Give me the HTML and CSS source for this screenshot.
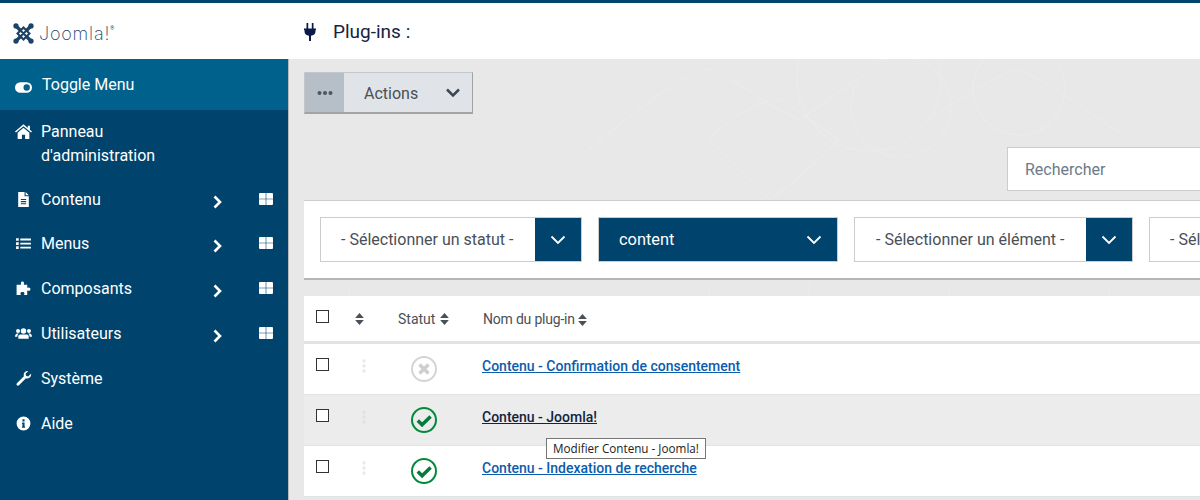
FILE: index.html
```html
<!DOCTYPE html>
<html lang="fr">
<head>
<meta charset="utf-8">
<title>Plug-ins</title>
<link rel="stylesheet" href="styles.css">
</head>
<body>
<header class="topbar">
  <div class="brand">
    <svg class="brand-mark" viewBox="0 0 24 24"><g fill="none" stroke="#1c4267" stroke-linecap="round"><path stroke-width="4" d="M3.500 3.500 9 9M20.500 3.500 15 9M3.500 20.500 9 15M20.500 20.500 15 15"/><path stroke-width="2.400" fill="#fff" d="M12 5.200 18.800 12 12 18.800 5.200 12z"/><path stroke-width="2.400" d="M8.800 8.800 15.200 15.200M15.200 8.800 8.800 15.200"/></g><g fill="#1c4267"><circle cx="3.400" cy="3.400" r="3"/><circle cx="20.600" cy="3.400" r="3"/><circle cx="3.400" cy="20.600" r="3"/><circle cx="20.600" cy="20.600" r="3"/></g></svg>
    <span class="brand-name">Joomla!</span><sup class="brand-reg">®</sup>
  </div>
  <div class="page-title">
    <svg class="plug" viewBox="0 0 12 18"><path fill="#0a1a4a" d="M2.500 0h1.700v5.500H2.500zM7.800 0h1.700v5.500H7.800zM0 5.500h12v1.500h-.5v1.500c0 2.400-2 4-4.500 4.300V18H5v-5.200C2.500 12.500.5 10.900.5 8.500V7H0z"/></svg>
    <h1>Plug-ins :</h1>
  </div>
</header>
<div class="layout">
  <nav class="sidebar">
    <a class="toggle"><svg class="ico ico-toggle" viewBox="0 0 16 10"><path fill="#fff" d="M5 0h6a5 5 0 0 1 0 10H5A5 5 0 0 1 5 0zm6 2a3 3 0 1 0 0 6 3 3 0 0 0 0-6z"/></svg>Toggle Menu</a>
    <a class="item item-tall"><svg class="ico" viewBox="0 0 16 14"><path fill="#fff" d="M8 .2 12 3.600V1.500h2v3.800l2 1.700-.9 1L8 2 .9 8 0 7zM2.500 8.200 8 3.500l5.500 4.700V14H9.500v-4h-3v4h-4z"/></svg><span>Panneau<br>d'administration</span></a>
    <a class="item item-first"><svg class="ico" viewBox="0 0 16 14"><path fill="#fff" fill-rule="evenodd" d="M3 0h6v4h4v10H3zM10 0l3 3h-3zM5.500 6.500v1h5v-1zM5.500 8.500v1h5v-1zM5.500 10.500v1h5v-1z"/></svg><span>Contenu</span><svg class="chev" viewBox="0 0 9 14"><path d="M1.500 1.500 7 7l-5.500 5.500"/></svg><svg class="grid-ico" viewBox="0 0 14 12"><path fill="#fff" d="M0 1a1 1 0 0 1 1-1h5.700v5.700H0zM7.300 0H13a1 1 0 0 1 1 1v4.700H7.300zM0 6.300h6.700V12H1a1 1 0 0 1-1-1zM7.300 6.300H14V11a1 1 0 0 1-1 1H7.300z"/></svg></a>
    <a class="item"><svg class="ico" viewBox="0 0 16 14"><path fill="#fff" d="M1 2h2.500v2.500H1zM5 2.400h10v1.800H5zM1 5.800h2.500v2.500H1zM5 6.200h10V8H5zM1 9.600h2.500v2.500H1zM5 10h10v1.800H5z"/></svg><span>Menus</span><svg class="chev" viewBox="0 0 9 14"><path d="M1.500 1.500 7 7l-5.500 5.500"/></svg><svg class="grid-ico" viewBox="0 0 14 12"><path fill="#fff" d="M0 1a1 1 0 0 1 1-1h5.700v5.700H0zM7.300 0H13a1 1 0 0 1 1 1v4.700H7.300zM0 6.300h6.700V12H1a1 1 0 0 1-1-1zM7.300 6.300H14V11a1 1 0 0 1-1 1H7.300z"/></svg></a>
    <a class="item"><svg class="ico" viewBox="0 0 16 14"><path fill="#fff" d="M5.500 2C5.500 1 6.200.4 7 .4S8.500 1 8.500 2c0 .6-.3.9-.3 1.400H11.500v3c.5 0 .8-.4 1.500-.4 1 0 1.500.8 1.500 1.600s-.5 1.600-1.500 1.600c-.7 0-1-.4-1.500-.4V13H8.500c0-.6.400-.9.400-1.400 0-.9-.9-1.300-1.900-1.300s-1.900.4-1.900 1.300c0 .5.400.8.400 1.400H1.500V3.400h4.300C5.800 2.900 5.500 2.600 5.500 2z"/></svg><span>Composants</span><svg class="chev" viewBox="0 0 9 14"><path d="M1.500 1.500 7 7l-5.500 5.500"/></svg><svg class="grid-ico" viewBox="0 0 14 12"><path fill="#fff" d="M0 1a1 1 0 0 1 1-1h5.700v5.700H0zM7.300 0H13a1 1 0 0 1 1 1v4.700H7.300zM0 6.300h6.700V12H1a1 1 0 0 1-1-1zM7.300 6.300H14V11a1 1 0 0 1-1 1H7.300z"/></svg></a>
    <a class="item"><svg class="ico" viewBox="0 0 18 14"><path fill="#fff" d="M9 1.500a2.900 2.900 0 1 1 0 5.800 2.900 2.900 0 0 1 0-5.800zM3.200 2.200a2.100 2.100 0 1 1 0 4.200 2.100 2.100 0 0 1 0-4.200zM14.800 2.200a2.100 2.100 0 1 1 0 4.200 2.100 2.100 0 0 1 0-4.200zM5.500 8h7c1.200 0 2 .9 2 2v2.500h-11V10c0-1.100.8-2 2-2zM0 10.500C0 8.500 1 7 2.500 7h1.700C3 7.700 2.500 9 2.500 10.500zM18 10.500C18 8.500 17 7 15.500 7h-1.700C15 7.700 15.500 9 15.500 10.500z"/></svg><span>Utilisateurs</span><svg class="chev" viewBox="0 0 9 14"><path d="M1.500 1.500 7 7l-5.500 5.500"/></svg><svg class="grid-ico" viewBox="0 0 14 12"><path fill="#fff" d="M0 1a1 1 0 0 1 1-1h5.700v5.700H0zM7.300 0H13a1 1 0 0 1 1 1v4.700H7.300zM0 6.300h6.700V12H1a1 1 0 0 1-1-1zM7.300 6.300H14V11a1 1 0 0 1-1 1H7.300z"/></svg></a>
    <a class="item"><svg class="ico" viewBox="0 0 16 14"><path fill="#fff" d="M15 2.500l-2.600 2.500-2-.5-.5-2L12.500 0C10.500-.5 8 1 8.200 3.700c0 .5.100.9.200 1.200L2 11.200c-.8.800-.8 1.600-.2 2.200.6.600 1.400.6 2.200-.2l6.300-6.400c.4.100.8.200 1.200.2 2.700.1 4.200-2.400 3.500-4.500z"/></svg><span>Système</span></a>
    <a class="item"><svg class="ico" viewBox="0 0 16 14"><path fill="#fff" fill-rule="evenodd" d="M8 .5a6.500 6.500 0 1 1 0 13 6.500 6.500 0 0 1 0-13zM7 3v2h2V3zM6.500 6v1.200H7v2.600h-.5V11h3V9.800H9V6z"/></svg><span>Aide</span></a>
  </nav>
  <main class="content">
    <svg class="watermark" viewBox="0 0 912 441" aria-hidden="true"><g fill="none" stroke="#ebebeb" stroke-width="1.200"><circle cx="612" cy="48" r="50"/><circle cx="580" cy="20" r="72"/><circle cx="730" cy="30" r="46"/><path d="M300 90c40-30 80-70 120-80 30 10 60 40 90 50 20-10 40-30 60-40M420 80c20-20 50-40 70-40 20 10 40 30 60 40-20 20-50 50-70 60-20-20-40-40-60-60zM640 60c30-20 60-40 90-50 40 20 80 50 110 70"/></g><g fill="none" stroke="#ebebeb" stroke-width="1"><path d="M60 224v12M120 224c10 4 10 8 0 12M320 224c-12 4-12 8 0 12M420 224v12M450 224c12 4 12 8 0 12M520 224v12M590 224c-12 4-12 8 0 12M660 224v12M760 224c12 4 12 8 0 12M820 224v12"/></g></svg>
    <div class="toolbar">
      <button class="actions"><span class="actions-icon"><svg viewBox="0 0 16 4"><circle cx="2.500" cy="2" r="2"/><circle cx="8" cy="2" r="2"/><circle cx="13.500" cy="2" r="2"/></svg></span><span class="actions-label">Actions</span><svg class="actions-chev" viewBox="0 0 16 10"><path d="M2 1.500l6 6 6-6"/></svg></button>
    </div>
    <div class="search-row">
      <div class="search">Rechercher</div>
    </div>
    <section class="filters">
      <div class="select sel-1"><span class="select-text">- Sélectionner un statut -</span><span class="select-btn"><svg viewBox="0 0 16 10"><path d="M1.500 1.500 8 8l6.500-6.500"/></svg></span></div>
      <div class="select select-active sel-2"><span class="select-text">content</span><span class="select-btn"><svg viewBox="0 0 16 10"><path d="M1.500 1.500 8 8l6.500-6.500"/></svg></span></div>
      <div class="select sel-3"><span class="select-text">- Sélectionner un élément -</span><span class="select-btn"><svg viewBox="0 0 16 10"><path d="M1.500 1.500 8 8l6.500-6.500"/></svg></span></div>
      <div class="select sel-4"><span class="select-text">- Sélectionner un accès -</span><span class="select-btn"><svg viewBox="0 0 16 10"><path d="M1.500 1.500 8 8l6.500-6.500"/></svg></span></div>
    </section>
    <section class="table">
      <div class="row row-head">
        <span class="cell-check"><input type="checkbox" class="check"></span>
        <span class="cell-order"><svg class="sort" viewBox="0 0 8 11"><path d="M4 0l4 4.500H0zM4 11 0 6.500h8z"/></svg></span>
        <span class="cell-status">Statut <svg class="sort" viewBox="0 0 8 11"><path d="M4 0l4 4.500H0zM4 11 0 6.500h8z"/></svg></span>
        <span class="cell-name">Nom du plug-in <svg class="sort" viewBox="0 0 8 11"><path d="M4 0l4 4.500H0zM4 11 0 6.500h8z"/></svg></span>
      </div>
      <div class="row">
        <span class="cell-check"><input type="checkbox" class="check"></span>
        <span class="cell-order"><svg class="dots" viewBox="0 0 4 14"><circle cx="2" cy="2" r="1.700"/><circle cx="2" cy="7" r="1.700"/><circle cx="2" cy="12" r="1.700"/></svg></span>
        <span class="cell-status"><svg class="state" viewBox="0 0 26 26"><circle class="state-off" cx="13" cy="13" r="12"/><path class="state-x" d="M8.500 8.500l9 9M17.500 8.500l-9 9"/></svg></span>
        <a class="cell-name link">Contenu - Confirmation de consentement</a>
      </div>
      <div class="row row-hover">
        <span class="cell-check"><input type="checkbox" class="check"></span>
        <span class="cell-order"><svg class="dots" viewBox="0 0 4 14"><circle cx="2" cy="2" r="1.700"/><circle cx="2" cy="7" r="1.700"/><circle cx="2" cy="12" r="1.700"/></svg></span>
        <span class="cell-status"><svg class="state" viewBox="0 0 26 26"><circle class="state-on" cx="13" cy="13" r="12"/><path class="state-v" d="M6.800 13.500l4.300 4.300 8.500-8.300"/></svg></span>
        <span class="cell-name tip-wrap"><a class="link link-hover">Contenu - Joomla!</a><span class="tooltip">Modifier Contenu - Joomla!</span></span>
      </div>
      <div class="row">
        <span class="cell-check"><input type="checkbox" class="check"></span>
        <span class="cell-order"><svg class="dots" viewBox="0 0 4 14"><circle cx="2" cy="2" r="1.700"/><circle cx="2" cy="7" r="1.700"/><circle cx="2" cy="12" r="1.700"/></svg></span>
        <span class="cell-status"><svg class="state" viewBox="0 0 26 26"><circle class="state-on" cx="13" cy="13" r="12"/><path class="state-v" d="M6.800 13.500l4.300 4.300 8.500-8.300"/></svg></span>
        <a class="cell-name link">Contenu - Indexation de recherche</a>
      </div>
    </section>
  </main>
</div>
</body>
</html>
```
FILE: styles.css
```css
* { box-sizing: border-box; }
html, body { margin: 0; height: 500px; overflow: hidden; }
body { font-family: Roboto, "Liberation Sans", sans-serif; color: #495057; background: #e8e8e8; width: 1200px; }

.topbar { height: 59px; border-top: 3px solid #00456d; background: #fff; display: flex; align-items: center; }
.brand { width: 304px; padding-left: 13px; display: flex; align-items: center; color: #1c4267; margin-top: 4px; }
.brand-mark { width: 21px; height: 21px; flex: none; }
.brand-name { font-family: Inter, sans-serif; font-weight: 200; font-size: 18px; margin-left: 5px; letter-spacing: .8px; }
.brand-reg { font-size: 5px; margin-top: -10px; }
.page-title { display: flex; align-items: center; padding-top: 2px; }
.plug { width: 12px; height: 18px; flex: none; }
h1 { margin: 0 0 0 17px; font-size: 19px; font-weight: 400; color: #16233f; line-height: 24px; }

.layout { display: flex; height: 441px; }
.sidebar { width: 289px; flex: none; background: #00446d; color: #fff; font-size: 16px; line-height: 24px; border-right: 1px solid #b9b9b9; }
.toggle { display: flex; align-items: center; height: 51px; padding-left: 15px; padding-top: 1px; background: #00628c; }
.ico-toggle { width: 17px; height: 11px; margin-right: 10px; margin-top: 0; }
.item { display: flex; align-items: flex-start; padding: 10px 0 11px 15px; position: relative; }
.item-tall { padding-bottom: 10px; }
.item-first { padding-bottom: 10px; }
.ico { width: 17px; height: 15px; flex: none; margin: 4px 9px 0 0; }
.ico-toggle { margin-right: 10px; }
.toggle .ico { margin-right: 10px; }
.chev { width: 9px; height: 14px; position: absolute; left: 213px; top: 17px; fill: none; stroke: #fff; stroke-width: 2.600; }
.grid-ico { width: 14px; height: 12px; position: absolute; left: 259px; top: 15px; }

.content { flex: 1; position: relative; overflow: hidden; min-width: 0; padding-left: 15px; }
.watermark { position: absolute; left: 0; top: 0; width: 912px; height: 441px; }
.toolbar, .search-row, .filters, .table { position: relative; }
.toolbar { padding-top: 13px; height: 88px; }
.actions { display: flex; align-items: center; padding: 0; width: 169px; height: 42px; background: #e0e3e7; border: 1px solid #c4c8cc; border-right-color: #a3a3a3; border-bottom: 2px solid #a3a3a3; font: 16px Roboto, sans-serif; color: #495057; }
.actions-icon { width: 39px; height: 39px; background: #b6bec8; display: flex; align-items: center; justify-content: center; flex: none; }
.actions-icon svg { width: 16px; height: 4px; fill: #4c5560; }
.actions-label { margin: 2px 0 0 20px; }
.actions-chev { width: 16px; height: 10px; margin-left: 27px; fill: none; stroke: #3e4651; stroke-width: 2.500; }

.search-row { height: 53px; margin-left: 703px; }
.search { width: 300px; height: 44px; background: #fff; border: 1px solid #ccc; padding: 0 17px; font-size: 16px; line-height: 44px; color: #6c7a89; }

.filters { width: 1000px; height: 80px; background: #fff; border-top: 1px solid #ccc; border-bottom: 2px solid #b5b5b5; padding: 16px 0 0 16px; display: flex; gap: 16px; }
.select { height: 45px; border: 1px solid #ccc; display: flex; align-items: center; font-size: 16px; background: #fff; flex: none; position: relative; }
.sel-1 { width: 262px; }
.sel-2 { width: 240px; }
.sel-3 { width: 279px; }
.sel-4 { width: 262px; }
.select-text { flex: 1; padding-left: 20px; white-space: nowrap; }
.sel-3 .select-text { padding-left: 21px; }
.select-btn { width: 46px; height: 43px; background: #00446d; display: flex; align-items: center; justify-content: center; flex: none; }
.select-btn svg { width: 16px; height: 10px; fill: none; stroke: #fff; stroke-width: 1.800; }
.select-active { background: #00446d; color: #fff; }
.select-active .select-text { padding-left: 20px; font-size: 16.400px; }

.table { margin-top: 15px; width: 1000px; background: #fff; font-size: 14px; border-top: 1px solid #e6e8ea; }
.row { height: 51px; display: grid; grid-template-columns: 40px 40px 98px 1fr; border-bottom: 1px solid #dfe3e7; padding-top: 12px; }
.row-head { height: 48px; border-bottom: 3px solid #dfe3e7; padding-top: 0; align-items: center; color: #495057; }
.row-hover { background: #ececec; }
.cell-check { padding-left: 12px; padding-top: 2px; display: flex; }
.row-head .cell-check { padding-top: 0; margin-top: -4px; }
.check { appearance: none; -webkit-appearance: none; width: 13px; height: 13px; margin: 0; border: 1px solid #333; background: #fff; border-radius: 0; }
.cell-order { padding-left: 18px; display: flex; align-items: flex-start; }
.row-head .cell-order { padding-left: 11px; align-items: center; }
.cell-status { padding-left: 27px; display: flex; align-items: flex-start; }
.row-head .cell-status { padding-left: 14px; gap: 5px; align-items: center; }
.cell-name { white-space: nowrap; line-height: 20px; align-self: start; justify-self: start; margin-left: 0; }
.row-head .cell-name { align-self: center; margin-left: 1px; letter-spacing: -.2px; }
.sort { width: 9px; height: 12px; fill: #495057; display: inline-block; vertical-align: -2px; }
.dots { width: 4px; height: 14px; fill: #e7e9ec; margin-top: 3px; }
.row-hover .dots { fill: #dfe1e4; }
.state { width: 26px; height: 26px; fill: none; }
.state-off { stroke: #d4d4d4; stroke-width: 2; }
.state-x { stroke: #cfcfcf; stroke-width: 3.500; }
.state-on { stroke: #008a3a; stroke-width: 2; }
.state-v { stroke: #067a3a; stroke-width: 3.500; }
.link { color: #0b5cad; font-weight: 500; text-decoration: underline; }
.link-hover { color: #10253f; }
.tip-wrap { position: relative; }
.tooltip { position: absolute; left: 64px; top: 31px; height: 21px; width: 160px; background: #fff; border: 1px solid #767676; font-family: "Open Sans", sans-serif; font-size: 11.700px; font-weight: 400; line-height: 19px; padding-left: 6px; color: #222; white-space: nowrap; letter-spacing: 0; }
```
